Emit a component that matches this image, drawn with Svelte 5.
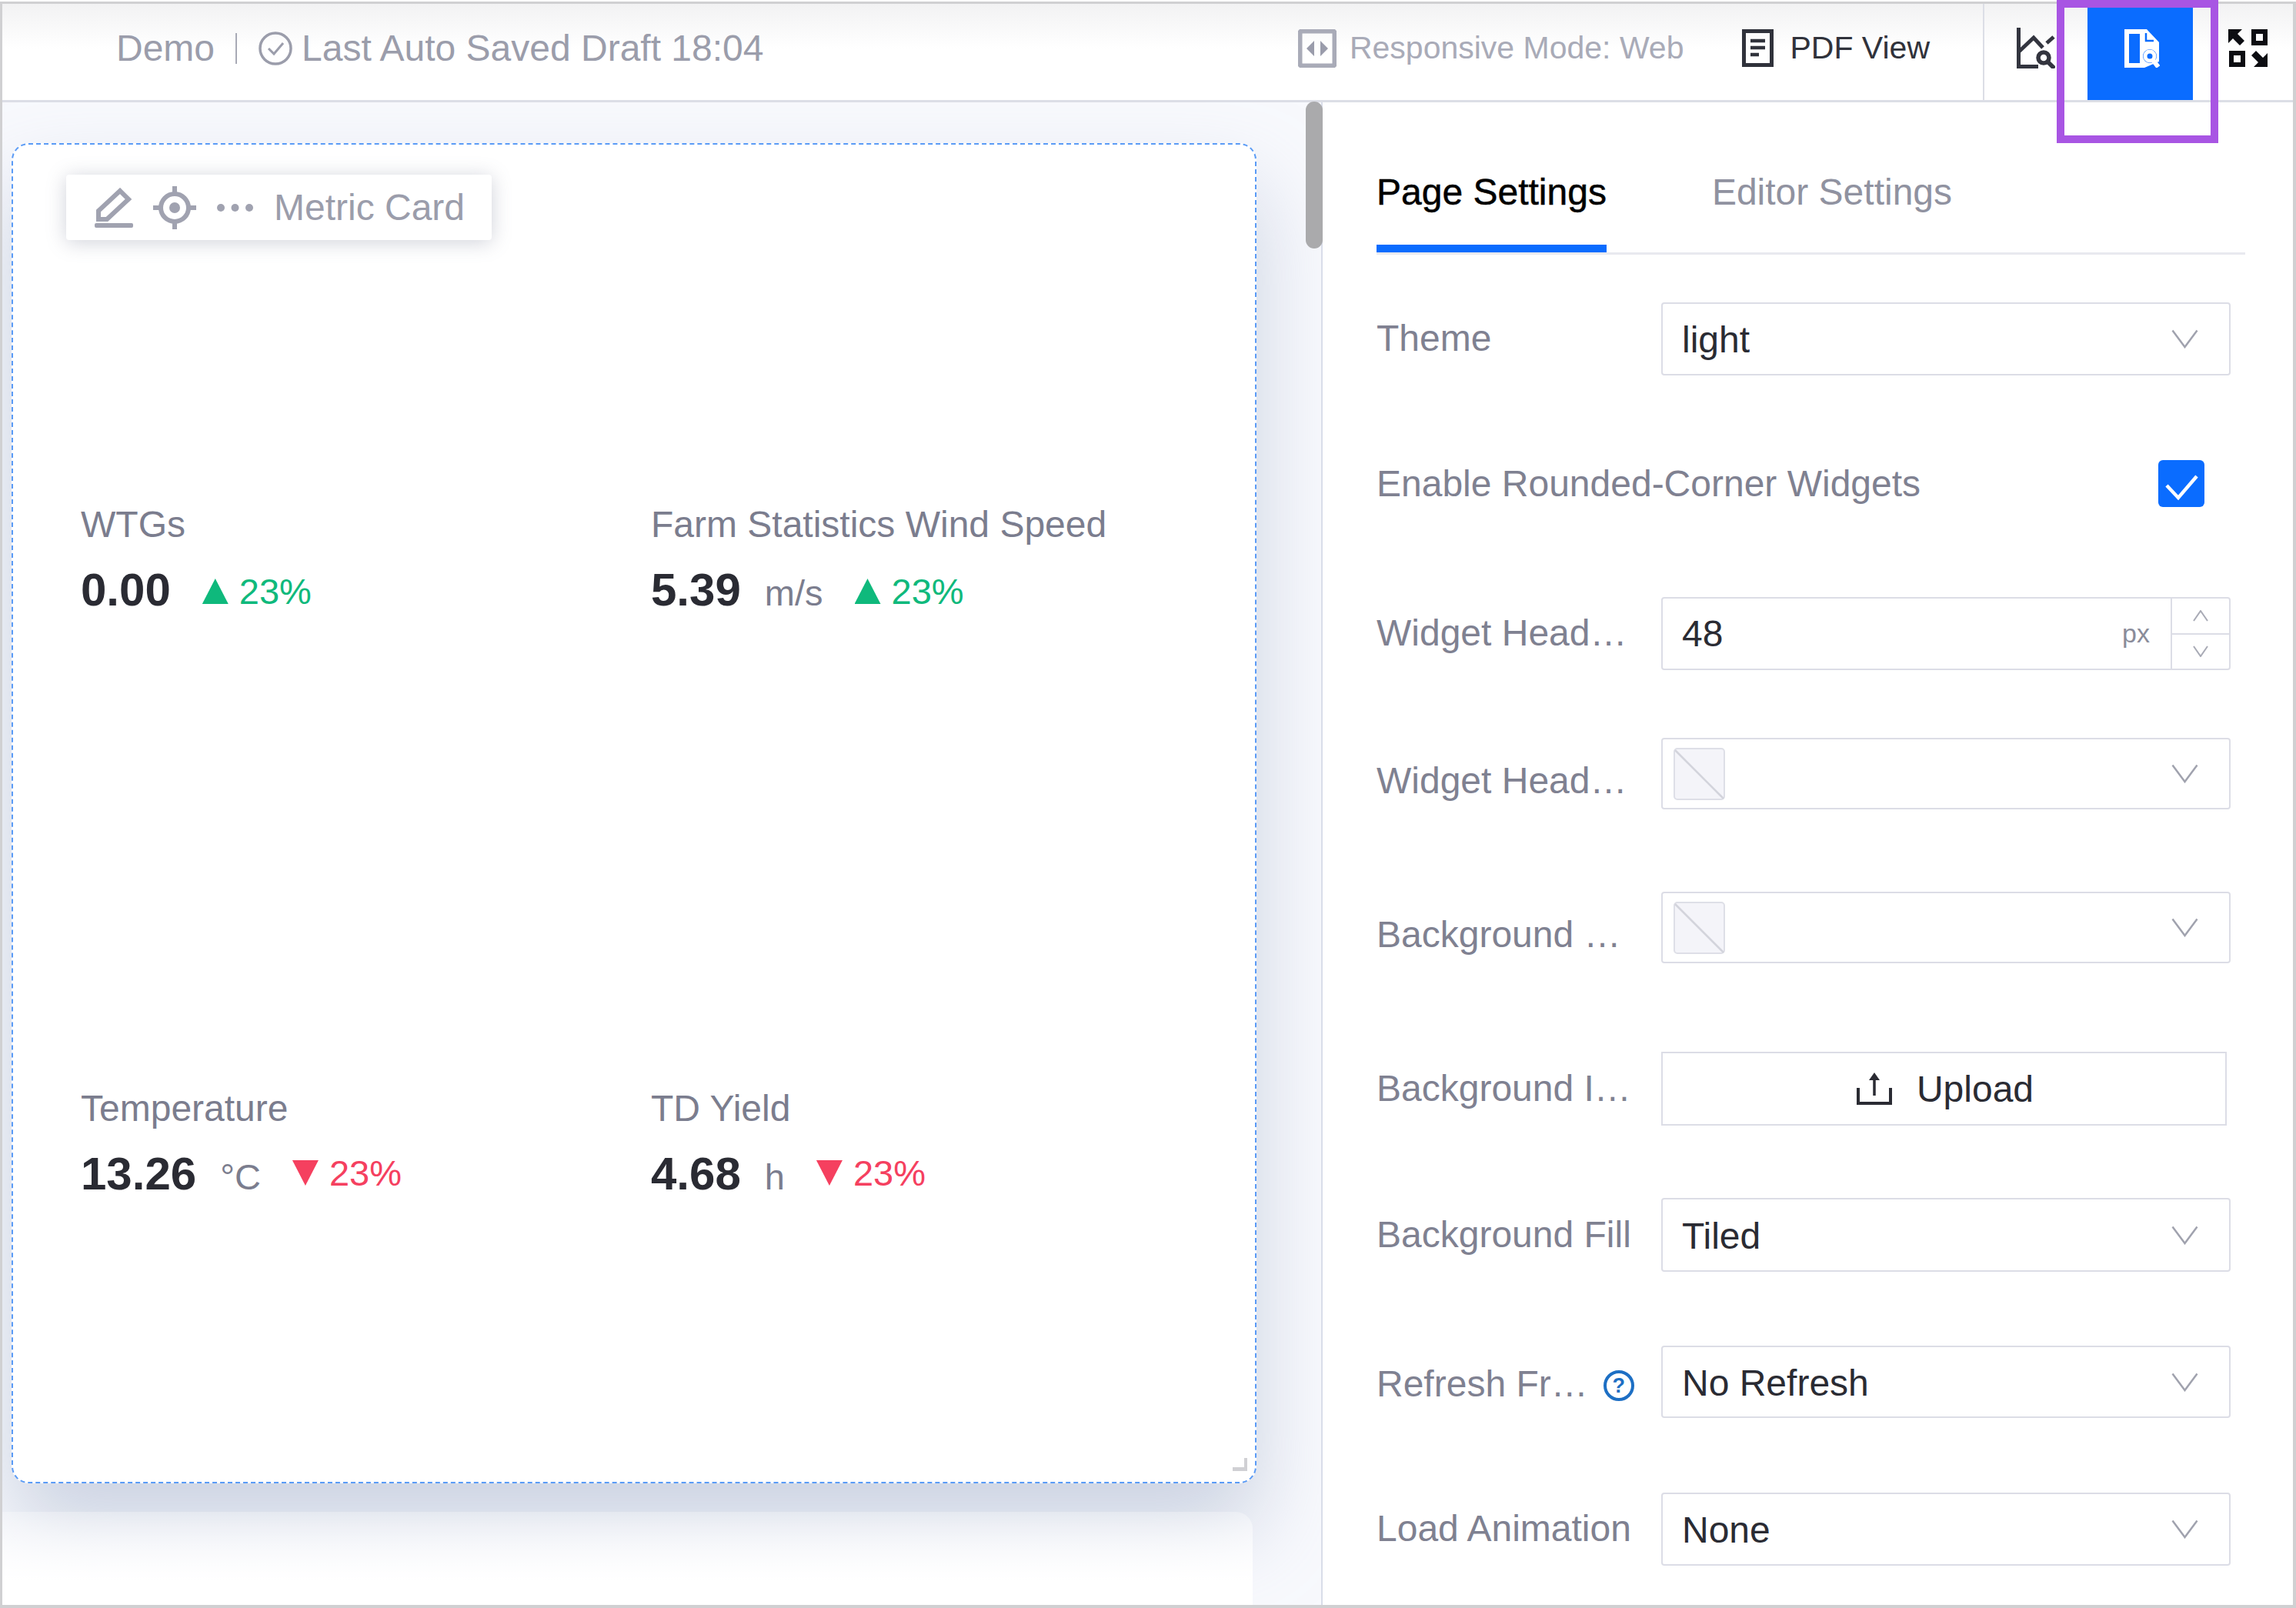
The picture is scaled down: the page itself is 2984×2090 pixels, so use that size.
<script>
  const metrics = [
    { title: 'WTGs', value: '0.00', unit: '', dir: 'up' },
    { title: 'Farm Statistics Wind Speed', value: '5.39', unit: 'm/s', dir: 'up' },
    { title: 'Temperature', value: '13.26', unit: '°C', dir: 'down' },
    { title: 'TD Yield', value: '4.68', unit: 'h', dir: 'down' }
  ];
  const rows = [
    { label: 'Theme', kind: 'select', value: 'light', h: 95, gap: 0, dy: -2 },
    { label: 'Enable Rounded-Corner Widgets', kind: 'check', h: 95, gap: 93, dy: 0 },
    { label: 'Widget Head…', kind: 'number', value: '48', h: 95, gap: 100, dy: -2 },
    { label: 'Widget Head…', kind: 'swatch', h: 93, gap: 88, dy: 18 },
    { label: 'Background …', kind: 'swatch', h: 93, gap: 107, dy: 18 },
    { label: 'Background I…', kind: 'upload', h: 96, gap: 115, dy: -2 },
    { label: 'Background Fill', kind: 'select', value: 'Tiled', h: 96, gap: 94, dy: -2 },
    { label: 'Refresh Fr…', kind: 'select', value: 'No Refresh', h: 94, gap: 96, dy: 4, help: true },
    { label: 'Load Animation', kind: 'select', value: 'None', h: 95, gap: 97, dy: -2 }
  ];
</script>

{#snippet chevron()}
  <svg class="chev" viewBox="0 0 35 25" width="35" height="25"><path d="M1.5 1.5 L17.5 23 L33.5 1.5" fill="none" stroke="#a0a2ae" stroke-width="2.5"/></svg>
{/snippet}

<div class="frame">
  <header class="header">
    <span class="demo">Demo</span>
    <i class="hsep"></i>
    <svg class="saved-ico" viewBox="0 0 44 44" width="44" height="44"><circle cx="22" cy="22" r="20" fill="none" stroke="#9b9dab" stroke-width="3.5"/><path d="M13 22 L20 29 L32 15" fill="none" stroke="#9b9dab" stroke-width="3"/></svg>
    <span class="saved">Last Auto Saved Draft 18:04</span>

    <svg class="resp-ico" viewBox="0 0 50 50" width="50" height="50"><rect x="2.5" y="2.5" width="45" height="45" rx="2" fill="none" stroke="#a9abb8" stroke-width="6"/><path d="M21 15 V35 L11 25 Z M29 15 V35 L39 25 Z" fill="#9a9cab"/></svg>
    <span class="resp">Responsive Mode: Web</span>
    <svg class="pdf-ico" viewBox="0 0 41 49" width="41" height="49"><rect x="2.5" y="2.5" width="36" height="44" fill="none" stroke="#30323b" stroke-width="5"/><path d="M11 15 H30 M11 24 H30 M11 33 H22" stroke="#30323b" stroke-width="4.5"/></svg>
    <span class="pdf">PDF View</span>
    <i class="vsep"></i>
    <svg class="chart-ico" viewBox="0 0 50 53" width="50" height="53"><path d="M2.5 0 V50.5 H28" fill="none" stroke="#33353f" stroke-width="5"/><path d="M3 31 L22 13 L34 26 M39 20 L48 12" fill="none" stroke="#33353f" stroke-width="5"/><circle cx="35" cy="39" r="7" fill="none" stroke="#33353f" stroke-width="5.5"/><path d="M40 44 L49 53" stroke="#33353f" stroke-width="5.5"/></svg>
    <div class="tab-active">
      <svg viewBox="0 0 46 50" width="46" height="50"><path d="M0 0 H29 L45 17 V42 L26 50 H0 Z M6 6 V44 H20 V6 Z" fill="#fff" fill-rule="evenodd"/><path d="M28 5 V15 H38" fill="none" stroke="#0a6cff" stroke-width="2.5"/><circle cx="33" cy="35" r="9" fill="#0a6cff"/><circle cx="33" cy="35" r="6" fill="none" stroke="#fff" stroke-width="5"/><path d="M37 40 L44 49" stroke="#fff" stroke-width="6"/></svg>
    </div>
    <svg class="full-ico" viewBox="0 0 51 49" width="51" height="49"><path d="M0 0 H18 L12 6 L21 15 L15 21 L6 12 L0 18 Z" fill="#0c0d12"/><rect x="33" y="3" width="15" height="15" fill="none" stroke="#0c0d12" stroke-width="6"/><rect x="4" y="31" width="15" height="15" fill="none" stroke="#0c0d12" stroke-width="6"/><path d="M51 49 H33 L39 43 L30 34 L36 28 L45 37 L51 31 Z" fill="#0c0d12"/></svg>
  </header>

  <div class="main">
    <div class="canvas">
      <section class="card">
        <div class="toolbar">
          <svg viewBox="0 0 50 52" width="50" height="52"><path d="M33 4 L44 15 L16 41 H5 V30 Z" fill="none" stroke="#a0a2b0" stroke-width="6"/><rect y="46" width="50" height="6" rx="2" fill="#a0a2b0"/></svg>
          <svg viewBox="0 0 56 56" width="56" height="56"><circle cx="28" cy="28" r="18" fill="none" stroke="#a0a2b0" stroke-width="6"/><circle cx="28" cy="28" r="7" fill="#a0a2b0"/><path d="M28 0 V10 M28 46 V56 M0 28 H10 M46 28 H56" stroke="#a0a2b0" stroke-width="6"/></svg>
          <svg viewBox="0 0 47 12" width="47" height="12"><circle cx="5" cy="6" r="5" fill="#a0a2b0"/><circle cx="23.5" cy="6" r="5" fill="#a0a2b0"/><circle cx="42" cy="6" r="5" fill="#a0a2b0"/></svg>
          <span>Metric Card</span>
        </div>
        <div class="metrics">
          {#each metrics as m}
            <div class="metric">
              <div class="m-title">{m.title}</div>
              <div class="m-line">
                <span class="m-value">{m.value}</span>
                {#if m.unit}<span class="m-unit">{m.unit}</span>{/if}
                <span class="trend {m.dir}"><i class="tri"></i><span>23%</span></span>
              </div>
            </div>
          {/each}
        </div>
        <i class="resize"></i>
      </section>
      <div class="next-card"></div>
    </div>

    <aside class="panel">
      <nav class="tabs">
        <span class="tab on">Page Settings</span>
        <span class="tab">Editor Settings</span>
      </nav>
      <div class="form">
        {#each rows as r}
          <div class="row" style="margin-top:{r.gap}px;height:{r.h}px">
            <div class="label" class:wide={r.kind === 'check'} style="margin-top:{r.dy}px">
              <span>{r.label}</span>
              {#if r.help}<span class="help">?</span>{/if}
            </div>
            {#if r.kind === 'select'}
              <div class="control select"><span class="val">{r.value}</span>{@render chevron()}</div>
            {:else if r.kind === 'swatch'}
              <div class="control select swatch-sel">
                <svg class="swatch" viewBox="0 0 67 68" width="67" height="68"><rect x="1" y="1" width="65" height="66" rx="4" fill="#f4f4f9" stroke="#dedfe7" stroke-width="2"/><path d="M2 3 L65 66" stroke="#d3d4dc" stroke-width="2.5"/></svg>
                {@render chevron()}
              </div>
            {:else if r.kind === 'number'}
              <div class="control number">
                <span class="num">{r.value}</span>
                <span class="px">px</span>
                <div class="steppers">
                  <div><svg viewBox="0 0 20 15" width="20" height="15"><path d="M1 14 L10 1 L19 14" fill="none" stroke="#a8aab5" stroke-width="2"/></svg></div>
                  <div><svg viewBox="0 0 20 15" width="20" height="15"><path d="M1 1 L10 14 L19 1" fill="none" stroke="#a8aab5" stroke-width="2"/></svg></div>
                </div>
              </div>
            {:else if r.kind === 'upload'}
              <div class="control upload">
                <svg viewBox="0 0 46 43" width="46" height="43"><path d="M23 30 V6" stroke="#2a2b33" stroke-width="3.5"/><path d="M23 0 L30 10 H16 Z" fill="#2a2b33"/><path d="M2 20 V40 H44 V20" fill="none" stroke="#2a2b33" stroke-width="4"/></svg>
                <span>Upload</span>
              </div>
            {:else if r.kind === 'check'}
              <div class="checkbox"><svg viewBox="0 0 60 61" width="60" height="61"><path d="M11 33 L26 49 L50 21" fill="none" stroke="#fff" stroke-width="4.5"/></svg></div>
            {/if}
          </div>
        {/each}
      </div>
    </aside>
    <i class="thumb"></i>
  </div>
  <i class="highlight"></i>
</div>

<style>
  :global(html), :global(body) { height: 2090px; overflow: hidden; }
  :global(body) { margin: 0; background: #fff; }
  * { box-sizing: border-box; }
  i { display: block; font-style: normal; }

  .frame {
    position: relative;
    width: 2984px;
    height: 2088px;
    margin-top: 2px;
    border: 3px solid #d0d0d2;
    border-right-width: 4px;
    border-bottom-width: 4px;
    display: flex;
    flex-direction: column;
    overflow: visible;
    font-family: "Liberation Sans", Arial, sans-serif;
    font-size: 48px;
    white-space: nowrap;
  }

  .header {
    flex: none;
    height: 128px;
    padding: 0 33px 10px 148px;
    display: flex;
    align-items: center;
    background: linear-gradient(#f2f2f3, #fff 58px);
    border-bottom: 3px solid #dcdee6;
    color: #9b9dab;
  }
  .hsep { width: 2px; height: 40px; background: #a8aab6; margin: 0 28px 0 27px; }
  .saved-ico { margin-right: 12px; }
  .resp-ico { margin-left: auto; margin-right: 17px; }
  .resp { font-size: 41px; color: #a9abb8; }
  .pdf-ico { margin-left: 76px; margin-right: 21px; }
  .pdf { font-size: 41px; color: #30323b; }
  .vsep { align-self: stretch; width: 2px; background: #dcdee6; margin: 0 42px 0 69px; margin-bottom: -10px; }
  .tab-active {
    align-self: stretch;
    width: 137px;
    margin: 0 46px 0 42px;
    margin-bottom: -10px;
    background: #0a6cff;
    display: flex;
    align-items: center;
    justify-content: center;
    padding: 0 0 10px 4px;
  }
  .full-ico { flex: none; }
  .chart-ico, .saved-ico, .resp-ico, .pdf-ico { flex: none; }

  .main { position: relative; flex: 1; min-height: 0; display: flex; }

  .canvas {
    flex: none;
    width: 1716px;
    padding: 53px 0 0 12px;
    background: #f8f9fd;
    border-right: 2px solid #d9dde9;
    overflow: hidden;
    display: flex;
    flex-direction: column;
  }
  .card {
    position: relative;
    z-index: 1;
    flex: none;
    width: 1618px;
    height: 1742px;
    background: #fff;
    border: 2px dashed #5a9bf6;
    border-radius: 22px;
    box-shadow: 0 60px 110px rgba(160, 174, 200, .5);
  }
  .next-card {
    position: relative;
    z-index: 2;
    flex: none;
    width: 1625px;
    height: 200px;
    margin: 37px 0 0 -12px;
    border-radius: 0 22px 0 0;
    background: linear-gradient(rgba(255, 255, 255, .3), #fff 90px);
  }

  .toolbar {
    position: absolute;
    left: 69px;
    top: 39px;
    width: 553px;
    height: 85px;
    padding-left: 37px;
    display: flex;
    align-items: center;
    background: #fff;
    border-radius: 4px;
    box-shadow: 0 3px 26px rgba(110, 114, 140, .32);
    color: #9b9dab;
  }
  .toolbar svg:nth-child(1) { margin-right: 26px; }
  .toolbar svg:nth-child(2) { margin-right: 27px; }
  .toolbar svg:nth-child(3) { margin-right: 27px; }

  .metrics {
    padding: 466px 0 0 88px;
    display: grid;
    grid-template-columns: 741px 1fr;
    grid-auto-rows: 759px;
  }
  .m-title { line-height: 56px; color: #7b7d8e; }
  .m-line { margin-top: 22px; display: flex; align-items: baseline; line-height: 70px; }
  .m-value { font-size: 60px; font-weight: 700; color: #2a2b33; }
  .m-unit { margin-left: 31px; font-size: 47px; color: #7b7d8e; }
  .trend { margin-left: 41px; display: flex; align-items: baseline; gap: 14px; font-size: 47px; }
  .tri { width: 34px; height: 33px; }
  .up { color: #0fb97c; transform: translateY(-2px); }
  .up .tri { background: #0fb97c; clip-path: polygon(50% 0, 100% 100%, 0 100%); }
  .down { color: #f5405f; transform: translateY(-5px); }
  .down .tri { background: #f5405f; clip-path: polygon(0 0, 100% 0, 50% 100%); }

  .resize {
    position: absolute;
    right: 10px;
    bottom: 14px;
    width: 19px;
    height: 17px;
    border-right: 4px solid #d0d0d4;
    border-bottom: 5px solid #d0d0d4;
  }

  .panel { flex: 1; min-width: 0; padding-left: 70px; background: #fff; overflow: hidden; }
  .tabs {
    width: 1129px;
    height: 198px;
    padding-top: 89px;
    display: flex;
    gap: 137px;
    border-bottom: 3px solid #e8e9ef;
  }
  .tab { height: 106px; line-height: 56px; color: #9092a0; }
  .tab.on { color: #000; border-bottom: 10px solid #0a6cff; -webkit-text-stroke: .5px #000; }

  .form { padding-top: 62px; }
  .row { display: flex; align-items: center; }
  .label { flex: none; width: 370px; display: flex; align-items: center; gap: 20px; color: #7f8191; }
  .label.wide { width: auto; }
  .help {
    width: 40px;
    height: 40px;
    border: 4px solid #1d6fc4;
    border-radius: 50%;
    color: #1d6fc4;
    font-size: 27px;
    font-weight: 700;
    line-height: 32px;
    text-align: center;
    margin-top: 6px;
  }

  .control {
    flex: none;
    width: 740px;
    height: 100%;
    background: #fff;
    border: 2px solid #dcdde6;
    border-radius: 4px;
    color: #2a2b33;
    display: flex;
    align-items: center;
  }
  .select { padding: 0 40px 0 25px; justify-content: space-between; }
  .val { padding-top: 2px; }
  .swatch-sel { padding-left: 14px; }
  .swatch { display: block; }

  .number { padding-left: 25px; }
  .num { flex: 1; }
  .px { font-size: 34px; color: #8a8c9a; margin-right: 27px; }
  .steppers { align-self: stretch; width: 76px; border-left: 2px solid #dcdde6; display: flex; flex-direction: column; }
  .steppers div { flex: 1; display: flex; align-items: center; justify-content: center; }
  .steppers div + div { border-top: 2px solid #dcdde6; }

  .upload { width: 735px; justify-content: center; gap: 32px; border-radius: 0; padding-left: 3px; }

  .checkbox {
    width: 60px;
    height: 61px;
    margin: -1px 34px 0 auto;
    background: #0a6cff;
    border-radius: 6px;
  }
  .row:has(.checkbox) { width: 1110px; }

  .thumb {
    position: absolute;
    left: 1694px;
    top: -1px;
    width: 22px;
    height: 191px;
    background: #aaaaac;
    border-radius: 11px;
    z-index: 3;
  }

  .highlight {
    position: absolute;
    left: 2670px;
    top: -5px;
    width: 210px;
    height: 186px;
    border: 10px solid #a855e3;
    z-index: 5;
  }
</style>
